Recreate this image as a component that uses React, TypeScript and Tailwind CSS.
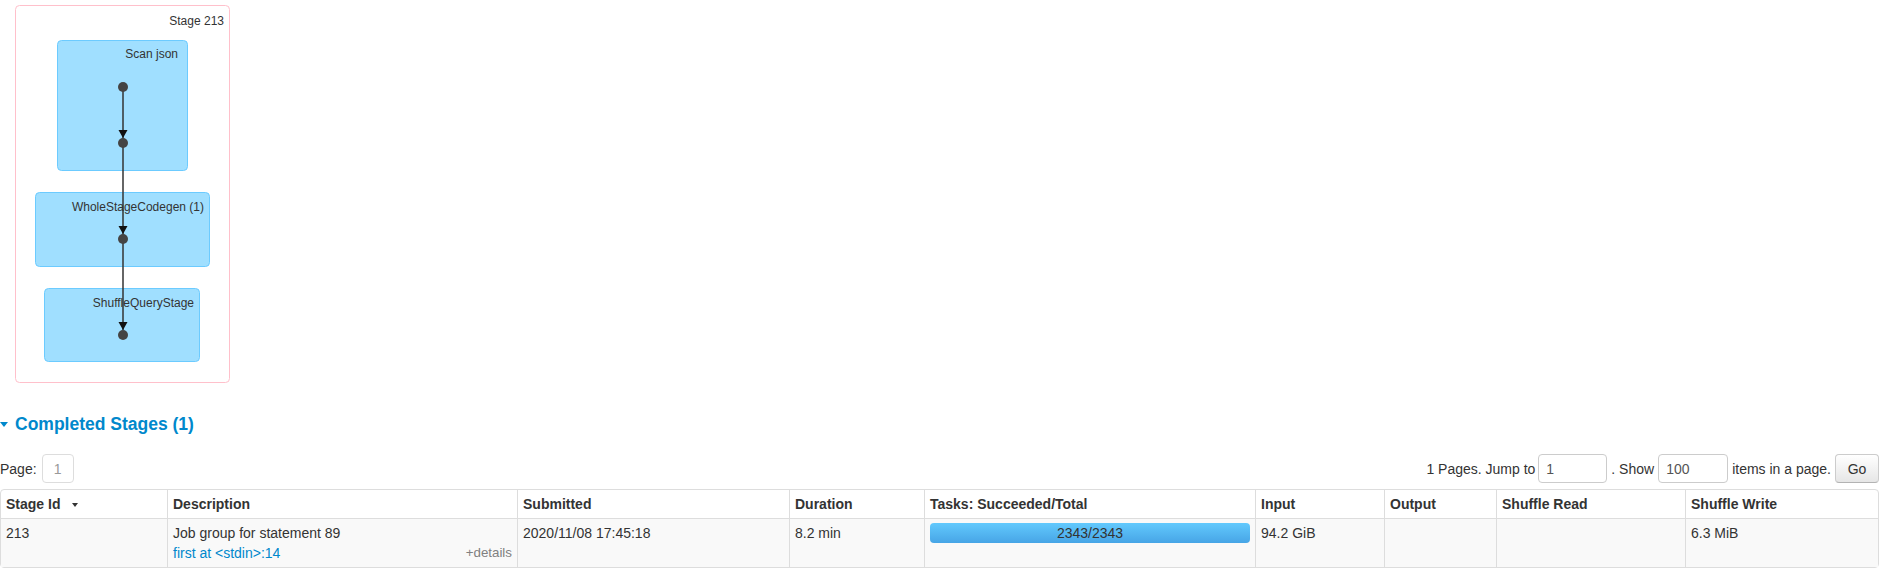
import React from "react";

type Cluster = { x: number; y: number; w: number; h: number; label: string; lx: number; ly: number };

const clusters: Cluster[] = [
  { x: 57.5, y: 40.5, w: 130, h: 130, label: "Scan json", lx: 178, ly: 58 },
  { x: 35.5, y: 192.5, w: 174, h: 74, label: "WholeStageCodegen (1)", lx: 204, ly: 211 },
  { x: 44.5, y: 288.5, w: 155, h: 73, label: "ShuffleQueryStage", lx: 194, ly: 307 },
];

const dots = [87, 143, 239, 335];

function DagViz() {
  return (
    <svg width={240} height={395} className="block" style={{ fontFamily: "'Liberation Sans', Arial, sans-serif" }}>
      <rect x={15.5} y={5.5} width={214} height={377} rx={4} fill="#fff" stroke="#ffc0cb" />
      <text x={224} y={25} textAnchor="end" fontSize={12} fill="#333">
        Stage 213
      </text>
      {clusters.map((c) => (
        <g key={c.label}>
          <rect x={c.x} y={c.y} width={c.w} height={c.h} rx={4} fill="#a0dfff" stroke="#6ccbff" />
          <text x={c.lx} y={c.ly} textAnchor="end" fontSize={12} fill="#333">
            {c.label}
          </text>
        </g>
      ))}
      {/* edges */}
      <line x1={123} y1={87} x2={123} y2={330} stroke="#333" strokeWidth={1.5} />
      {dots.slice(1).map((y) => (
        <polygon key={"a" + y} points={`118.5,${y - 13} 127.5,${y - 13} 123,${y - 5}`} fill="#111" />
      ))}
      {dots.map((y) => (
        <circle key={y} cx={123} cy={y} r={5} fill="#444" />
      ))}
    </svg>
  );
}

const cols = [
  { name: "Stage Id", w: 166 },
  { name: "Description", w: 350 },
  { name: "Submitted", w: 272 },
  { name: "Duration", w: 135 },
  { name: "Tasks: Succeeded/Total", w: 331 },
  { name: "Input", w: 129 },
  { name: "Output", w: 112 },
  { name: "Shuffle Read", w: 189 },
  { name: "Shuffle Write", w: 193 },
];

export default function App() {
  return (
    <div className="w-[1879px] bg-white text-[14px] leading-[20px] text-[#333] font-['Liberation_Sans',Arial,sans-serif]">
      <DagViz />

      <h4 className="mt-[19px] flex items-center text-[17.5px] leading-[20px] font-bold text-[#0088cc]">
        <span className="inline-block w-0 h-0 border-l-[4px] border-r-[4px] border-t-[5px] border-l-transparent border-r-transparent border-t-[#0088cc]" />
        <span className="ml-[7px]">Completed Stages (1)</span>
      </h4>

      <div className="mt-[20px] flex h-[29px] items-center justify-between">
        <div className="flex items-center">
          <span>Page:</span>
          <span className="ml-[5px] flex h-[29px] w-[32px] items-center justify-center rounded-[4px] border border-[#ddd] text-[#999]">
            1
          </span>
        </div>
        <div className="flex items-center">
          <span>1 Pages. Jump to</span>
          <input
            readOnly
            value="1"
            className="ml-[3px] h-[29px] w-[69px] rounded-[4px] border border-[#ccc] px-[7px] text-[14px] text-[#555] outline-none"
          />
          <span className="ml-[4px]">. Show</span>
          <input
            readOnly
            value="100"
            className="ml-[4px] h-[29px] w-[70px] rounded-[4px] border border-[#ccc] px-[7px] text-[14px] text-[#555] outline-none"
          />
          <span className="ml-[4px]">items in a page.</span>
          <button className="ml-[4px] h-[29px] w-[44px] rounded-[4px] border border-[#ccc] border-b-[#b3b3b3] bg-gradient-to-b from-white to-[#e6e6e6] text-[14px] text-[#333]">
            Go
          </button>
        </div>
      </div>

      <table className="mt-[6px] w-[1879px] table-fixed border-separate border-spacing-0 rounded-[4px] border border-[#ddd]">
        <colgroup>
          {cols.map((c) => (
            <col key={c.name} style={{ width: c.w }} />
          ))}
        </colgroup>
        <thead>
          <tr>
            {cols.map((c, i) => (
              <th
                key={c.name}
                className={
                  "px-[5px] py-[4px] text-left align-top font-bold " + (i > 0 ? "border-l border-[#ddd]" : "")
                }
              >
                {c.name}
                {i === 0 && (
                  <span className="ml-[12px] inline-block h-0 w-0 -translate-y-[2px] border-l-[3px] border-r-[3px] border-t-[4px] border-l-transparent border-r-transparent border-t-[#333]" />
                )}
              </th>
            ))}
          </tr>
        </thead>
        <tbody>
          <tr className="bg-[#f9f9f9]">
            <td className="border-t border-[#ddd] px-[5px] py-[4px] align-top">213</td>
            <td className="border-l border-t border-[#ddd] px-[5px] py-[4px] align-top">
              <div>Job group for statement 89</div>
              <div>
                <span className="float-right text-[13.33px] text-[#808080]">+details</span>
                <span className="text-[#0088cc]">first at &lt;stdin&gt;:14</span>
              </div>
            </td>
            <td className="border-l border-t border-[#ddd] px-[5px] py-[4px] align-top">2020/11/08 17:45:18</td>
            <td className="border-l border-t border-[#ddd] px-[5px] py-[4px] align-top">8.2 min</td>
            <td className="border-l border-t border-[#ddd] px-[5px] py-[4px] align-top">
              <div className="flex h-[20px] w-full items-center justify-center rounded-[4px] bg-gradient-to-b from-[#62c9fd] to-[#47a5e6] text-[14px] text-[#333]">
                2343/2343
              </div>
            </td>
            <td className="border-l border-t border-[#ddd] px-[5px] py-[4px] align-top">94.2 GiB</td>
            <td className="border-l border-t border-[#ddd] px-[5px] py-[4px] align-top"></td>
            <td className="border-l border-t border-[#ddd] px-[5px] py-[4px] align-top"></td>
            <td className="border-l border-t border-[#ddd] px-[5px] py-[4px] align-top">6.3 MiB</td>
          </tr>
        </tbody>
      </table>
    </div>
  );
}
